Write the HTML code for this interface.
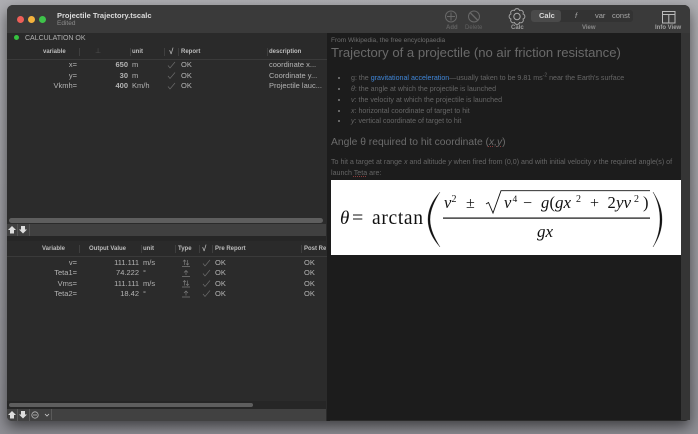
<!DOCTYPE html>
<html><head><meta charset="utf-8">
<style>
html,body{margin:0;padding:0;width:698px;height:434px;overflow:hidden}
body{background:#9c9ca1;font-family:"Liberation Sans",sans-serif}
#all{position:absolute;left:0;top:0;width:698px;height:434px;background:linear-gradient(#aeaeb2,#8e8e94);filter:blur(.3px);overflow:hidden}
.a{position:absolute}
.t{position:absolute;white-space:nowrap;line-height:10px;height:10px}
.r{text-align:right}
.h{font-size:6px;color:#bcbcbc;font-weight:bold}
.c{font-size:7.5px;color:#b4b4b4}
.b{font-weight:bold}
.v{width:1px;background:#3f3f3f}
.w{font-size:7.1px;color:#666}
.d{width:2px;height:2px;background:#666;left:338px}
.l{font-size:6px;color:#a0a0a0;font-weight:bold}
#win{left:7px;top:5px;width:683px;height:416px;background:#2b2b2b;border-radius:6px 6px 5px 5px;overflow:hidden;box-shadow:0 6px 14px rgba(0,0,0,.55)}
.wav{text-decoration:underline dotted #8a3a3a;text-decoration-thickness:.6px}
</style></head><body><div id="all">
<div class="a" id="win"></div>
<div class="a" style="left:7px;top:5px;width:683px;height:28px;background:#3a3a3a;border-radius:6px 6px 0 0"></div>
<div class="a" style="left:7px;top:33px;width:320px;height:26px;background:#2a2a2a"></div>
<div class="a" style="left:7px;top:59px;width:320px;height:1px;background:#3a3a3a"></div>
<div class="a" style="left:327px;top:33px;width:3px;height:388px;background:#1c1c1c"></div>
<div class="a" style="left:330px;top:33px;width:351px;height:387px;background:#1c1c1c"></div>
<div class="a" style="left:681px;top:33px;width:9px;height:387px;background:#353535"></div>
<!-- traffic -->
<div class="a" style="left:17px;top:16px;width:7px;height:7px;border-radius:50%;background:#ee5f58"></div>
<div class="a" style="left:28px;top:16px;width:7px;height:7px;border-radius:50%;background:#f4b23d"></div>
<div class="a" style="left:39px;top:16px;width:7px;height:7px;border-radius:50%;background:#3ec34a"></div>
<div class="t b" style="left:57px;top:11px;font-size:7.5px;color:#dcdcdc">Projectile Trajectory.tscalc</div>
<div class="t" style="left:57px;top:19px;font-size:6.5px;color:#8c8c8c">Edited</div>
<!-- toolbar icons -->
<svg class="a" style="left:420px;top:0" width="278" height="33" fill="none">
<circle cx="31" cy="16.500" r="5.500" stroke="#686868"/><path d="M31 12.500v8M27 16.500h8" stroke="#686868"/>
<circle cx="54" cy="16.500" r="5.500" stroke="#686868"/><path d="M50 12.500l8 8" stroke="#686868" stroke-width="1.300"/>
<path d="M103 19a2.600 2.600 0 0 1-3.500 3.500a2.600 2.600 0 0 1-5 0a2.600 2.600 0 0 1-3.500-3.500a2.600 2.600 0 0 1 0-5a2.600 2.600 0 0 1 3.500-3.500a2.600 2.600 0 0 1 5 0a2.600 2.600 0 0 1 3.500 3.500a2.600 2.600 0 0 1 0 5z" stroke="#aaa" stroke-width=".9"/>
<circle cx="97" cy="16.500" r="3.200" stroke="#aaa"/>
<rect x="242.500" y="11.500" width="12.500" height="11.500" stroke="#bbb"/><path d="M242.500 14.500h12.500M248.800 14.500v8.500" stroke="#bbb"/>
</svg>
<div class="t l" style="left:446px;top:23px;color:#626262">Add</div>
<div class="t l" style="left:465px;top:23px;color:#626262;font-weight:normal">Delete</div>
<div class="t l" style="left:511px;top:23px">Calc</div>
<div class="t l" style="left:582px;top:23px;color:#8a8a8a">View</div>
<div class="t l" style="left:655px;top:23px">Info View</div>
<div class="a" style="left:531px;top:10px;width:102px;height:12px;background:#333;border-radius:3px"></div>
<div class="a" style="left:531px;top:10px;width:30px;height:12px;background:#4a4a4a;border-radius:3px"></div>
<div class="t b" style="left:539px;top:11px;font-size:7.5px;color:#d8d8d8">Calc</div>
<div class="t" style="left:575px;top:11px;font-size:7.5px;color:#a8a8a8;font-style:italic">f</div>
<div class="t" style="left:595px;top:11px;font-size:7.5px;color:#a8a8a8">var</div>
<div class="t" style="left:612px;top:11px;font-size:7.5px;color:#a8a8a8">const</div>
<!-- status -->
<div class="a" style="left:14px;top:35px;width:5px;height:5px;border-radius:50%;background:#35c23f"></div>
<div class="t" style="left:25px;top:34px;font-size:7px;color:#b0b0b0">CALCULATION OK</div>
<!-- top table -->
<div class="t h" style="left:43px;top:47px">variable</div>
<div class="t" style="left:95px;top:47px;font-size:7px;color:#555">⊥</div>
<div class="t h" style="left:132px;top:47px">unit</div>
<div class="t h" style="left:169px;top:47px;font-size:8px">√</div>
<div class="t h" style="left:181px;top:47px">Report</div>
<div class="t h" style="left:269px;top:47px">description</div>
<div class="a v" style="left:79px;top:48px;height:8px"></div>
<div class="a v" style="left:130px;top:48px;height:8px"></div>
<div class="a v" style="left:164px;top:48px;height:8px"></div>
<div class="a v" style="left:178px;top:48px;height:8px"></div>
<div class="a v" style="left:267px;top:48px;height:8px"></div>

<div class="t c r" style="left:27px;width:50px;top:60px">x=</div>
<div class="t c r b" style="left:88px;width:40px;top:60px">650</div>
<div class="t c" style="left:132px;top:60px">m</div>
<div class="t c" style="left:181px;top:60px">OK</div>
<div class="t c" style="left:269px;top:60px">coordinate x...</div>

<div class="t c r" style="left:27px;width:50px;top:70.500px">y=</div>
<div class="t c r b" style="left:88px;width:40px;top:70.500px">30</div>
<div class="t c" style="left:132px;top:70.500px">m</div>
<div class="t c" style="left:181px;top:70.500px">OK</div>
<div class="t c" style="left:269px;top:70.500px">Coordinate y...</div>

<div class="t c r" style="left:27px;width:50px;top:81px">Vkmh=</div>
<div class="t c r b" style="left:88px;width:40px;top:81px">400</div>
<div class="t c" style="left:132px;top:81px">Km/h</div>
<div class="t c" style="left:181px;top:81px">OK</div>
<div class="t c" style="left:269px;top:81px">Projectile lauc...</div>
<svg class="a" style="left:166px;top:60px" width="12" height="32" fill="none" stroke="#6c6c6c" stroke-width=".7"><path d="M2 5.500l2 2.500 5-6"/><path d="M2 16l2 2.500 5-6"/><path d="M2 26.500l2 2.500 5-6"/></svg>

<!-- mid bars -->
<div class="a" style="left:9px;top:218px;width:314px;height:5px;background:#5e5e5e;border-radius:3px"></div>
<div class="a" style="left:7px;top:224px;width:319px;height:12px;background:#404040"></div>
<div class="a" style="left:7px;top:236px;width:319px;height:5px;background:#262626"></div>
<div class="a" style="left:7px;top:241px;width:320px;height:15px;background:#2a2a2a"></div>
<div class="a" style="left:7px;top:256px;width:320px;height:1px;background:#3a3a3a"></div>
<svg class="a" style="left:7px;top:224px" width="30" height="12"><path d="M5 2l4 4H7v3.500H3V6H1z" fill="#ddd"/><path d="M16 9.500l-4-4h2V2h4v3.500h2z" fill="#ddd"/><path d="M10.500 0v12M22.500 0v12" stroke="#555"/></svg>

<!-- lower table -->
<div class="t h" style="left:42px;top:244px">Variable</div>
<div class="t h" style="left:89px;top:244px">Output Value</div>
<div class="t h" style="left:143px;top:244px">unit</div>
<div class="t h" style="left:178px;top:244px">Type</div>
<div class="t h" style="left:202px;top:244px;font-size:8px">√</div>
<div class="t h" style="left:215px;top:244px">Pre Report</div>
<div class="t h" style="left:304px;top:244px;width:22px;overflow:hidden">Post Report</div>
<div class="a v" style="left:79px;top:245px;height:8px"></div>
<div class="a v" style="left:141px;top:245px;height:8px"></div>
<div class="a v" style="left:175px;top:245px;height:8px"></div>
<div class="a v" style="left:199px;top:245px;height:8px"></div>
<div class="a v" style="left:212px;top:245px;height:8px"></div>
<div class="a v" style="left:301px;top:245px;height:8px"></div>

<div class="t c r" style="left:27px;width:50px;top:258px">v=</div>
<div class="t c r" style="left:89px;width:50px;top:258px">111.111</div>
<div class="t c" style="left:143px;top:258px">m/s</div>
<div class="t c" style="left:215px;top:258px">OK</div>
<div class="t c" style="left:304px;top:258px">OK</div>

<div class="t c r" style="left:27px;width:50px;top:268px">Teta1=</div>
<div class="t c r" style="left:89px;width:50px;top:268px">74.222</div>
<div class="t c" style="left:143px;top:268px">°</div>
<div class="t c" style="left:215px;top:268px">OK</div>
<div class="t c" style="left:304px;top:268px">OK</div>

<div class="t c r" style="left:27px;width:50px;top:278.500px">Vms=</div>
<div class="t c r" style="left:89px;width:50px;top:278.500px">111.111</div>
<div class="t c" style="left:143px;top:278.500px">m/s</div>
<div class="t c" style="left:215px;top:278.500px">OK</div>
<div class="t c" style="left:304px;top:278.500px">OK</div>

<div class="t c r" style="left:27px;width:50px;top:288.500px">Teta2=</div>
<div class="t c r" style="left:89px;width:50px;top:288.500px">18.42</div>
<div class="t c" style="left:143px;top:288.500px">°</div>
<div class="t c" style="left:215px;top:288.500px">OK</div>
<div class="t c" style="left:304px;top:288.500px">OK</div>
<svg class="a" style="left:201px;top:258px" width="12" height="42" fill="none" stroke="#6c6c6c" stroke-width=".7"><path d="M2 5.500l2 2.500 5-6"/><path d="M2 15.500l2 2.500 5-6"/><path d="M2 26l2 2.500 5-6"/><path d="M2 36l2 2.500 5-6"/></svg>

<svg class="a" style="left:180px;top:258px" width="14" height="42" fill="none" stroke="#7a7a7a" stroke-width=".7">
<path d="M2 8.500h8M4.500 7V2M3 3.500l1.500-1.500 1.500 1.500M7.500 2v5M6 5.500l1.500 1.500 1.500-1.500"/>
<path d="M2 18.500h8M6 17V12.500M4 14.500l2-2 2 2"/>
<path d="M2 29h8M4.500 27.500v-5M3 24l1.500-1.500 1.500 1.500M7.500 22.500v5M6 26l1.500 1.500 1.500-1.500"/>
<path d="M2 39h8M6 37.500V33M4 35l2-2 2 2"/>
</svg>

<!-- bottom -->
<div class="a" style="left:7px;top:401px;width:319px;height:8px;background:#262626"></div>
<div class="a" style="left:9px;top:403px;width:244px;height:4px;background:#5e5e5e;border-radius:2px"></div>
<div class="a" style="left:7px;top:409px;width:319px;height:12px;background:#414141;border-radius:0 0 0 5px"></div>
<svg class="a" style="left:7px;top:409px" width="50" height="12" fill="none"><path d="M5 2l4 4H7v3.500H3V6H1z" fill="#ddd"/><path d="M16 9.500l-4-4h2V2h4v3.500h2z" fill="#ddd"/><path d="M10.500 0v12M22.500 0v12M44.500 0v11" stroke="#5a5a5a"/><circle cx="28" cy="6" r="3.200" stroke="#bbb" stroke-width=".8"/><path d="M26 6h4" stroke="#bbb" stroke-width=".8"/><path d="M38 5l2 2 2-2" stroke="#ccc" stroke-width=".8"/></svg>

<!-- right content -->
<div class="t" style="left:331px;top:36px;font-size:6.500px;color:#6e6e6e">From Wikipedia, the free encyclopaedia</div>
<div class="t" style="left:331px;top:44px;height:18px;line-height:18px;font-size:13.100px;color:#6a6a6a">Trajectory of a projectile (no air friction resistance)</div>
<div class="a d" style="top:77px"></div>
<div class="a d" style="top:88px"></div>
<div class="a d" style="top:99px"></div>
<div class="a d" style="top:110px"></div>
<div class="a d" style="top:120px"></div>
<div class="t w" style="left:351px;top:73px">g: the <span style="color:#3f86d8">gravitational acceleration</span>—usually taken to be 9.81 ms<sup style="font-size:5px;line-height:0">-2</sup> near the Earth's surface</div>
<div class="t w" style="left:351px;top:83.500px"><i>θ</i>: the angle at which the projectile is launched</div>
<div class="t w" style="left:351px;top:94.500px"><i>v</i>: the velocity at which the projectile is launched</div>
<div class="t w" style="left:351px;top:105.500px"><i>x</i>: horizontal coordinate of target to hit</div>
<div class="t w" style="left:351px;top:116px"><i>y</i>: vertical coordinate of target to hit</div>
<div class="t" style="left:331px;top:136px;height:14px;line-height:14px;font-size:10.300px;color:#6c6c6c">Angle θ required to hit coordinate (<i class="wav">x,y</i>)</div>
<div class="t w" style="left:331px;top:157px">To hit a target at range <i>x</i> and altitude <i>y</i> when fired from (0,0) and with initial velocity <i>v</i> the required angle(s) of</div>
<div class="t w" style="left:331px;top:167.500px">launch <span class="wav">Teta</span> are:</div>

<!-- formula -->
<svg class="a" style="left:331px;top:180px" width="350" height="75" fill="#111">
<rect width="350" height="75" fill="#fff"/>
<g font-family="'Liberation Serif',serif" transform="translate(-331,-180)">
<text x="340" y="224" font-size="19" font-style="italic">θ</text>
<text x="352" y="224" font-size="20">=</text>
<text x="372" y="224" font-size="19.500" textLength="51" lengthAdjust="spacing">arctan</text>
<path d="M440 192C432 201 428 210 428 219.500C428 229 432 238 440 247C434.500 238 430 229 430 219.500C430 210 434.500 201 440 192z" stroke="#111" stroke-width=".3"/>
<path d="M653 192C659 201 662 210 662 219.500C662 229 659 238 653 247C658 238 660 229 660 219.500C660 210 658 201 653 192z" stroke="#111" stroke-width=".3"/>
<text x="444" y="208" font-size="16.500" font-style="italic">v</text>
<text x="451.500" y="202" font-size="10">2</text>
<text x="466" y="208" font-size="16">±</text>
<path d="M486 204l2.500-1.500 4.500 10.500 8-22.300H650" fill="none" stroke="#111" stroke-width=".9"/>
<text x="504" y="208" font-size="16.500" font-style="italic">v</text>
<text x="512.500" y="202" font-size="9.500">4</text>
<text x="523" y="208" font-size="16">−</text>
<text x="541" y="208" font-size="16.500" font-style="italic">g</text>
<text x="549.500" y="208" font-size="16.500">(</text>
<text x="555" y="208" font-size="17" font-style="italic">gx</text>
<text x="576" y="202" font-size="10">2</text>
<text x="590" y="208" font-size="16">+</text>
<text x="607.500" y="208" font-size="16.500">2</text>
<text x="616" y="208" font-size="17" font-style="italic">yv</text>
<text x="634" y="202" font-size="10">2</text>
<text x="643" y="208" font-size="16.500">)</text>
<rect x="443" y="217.500" width="207" height="1.200"/>
<text x="537" y="237" font-size="17" font-style="italic">gx</text>
</g>
</svg>
</div></body></html>
